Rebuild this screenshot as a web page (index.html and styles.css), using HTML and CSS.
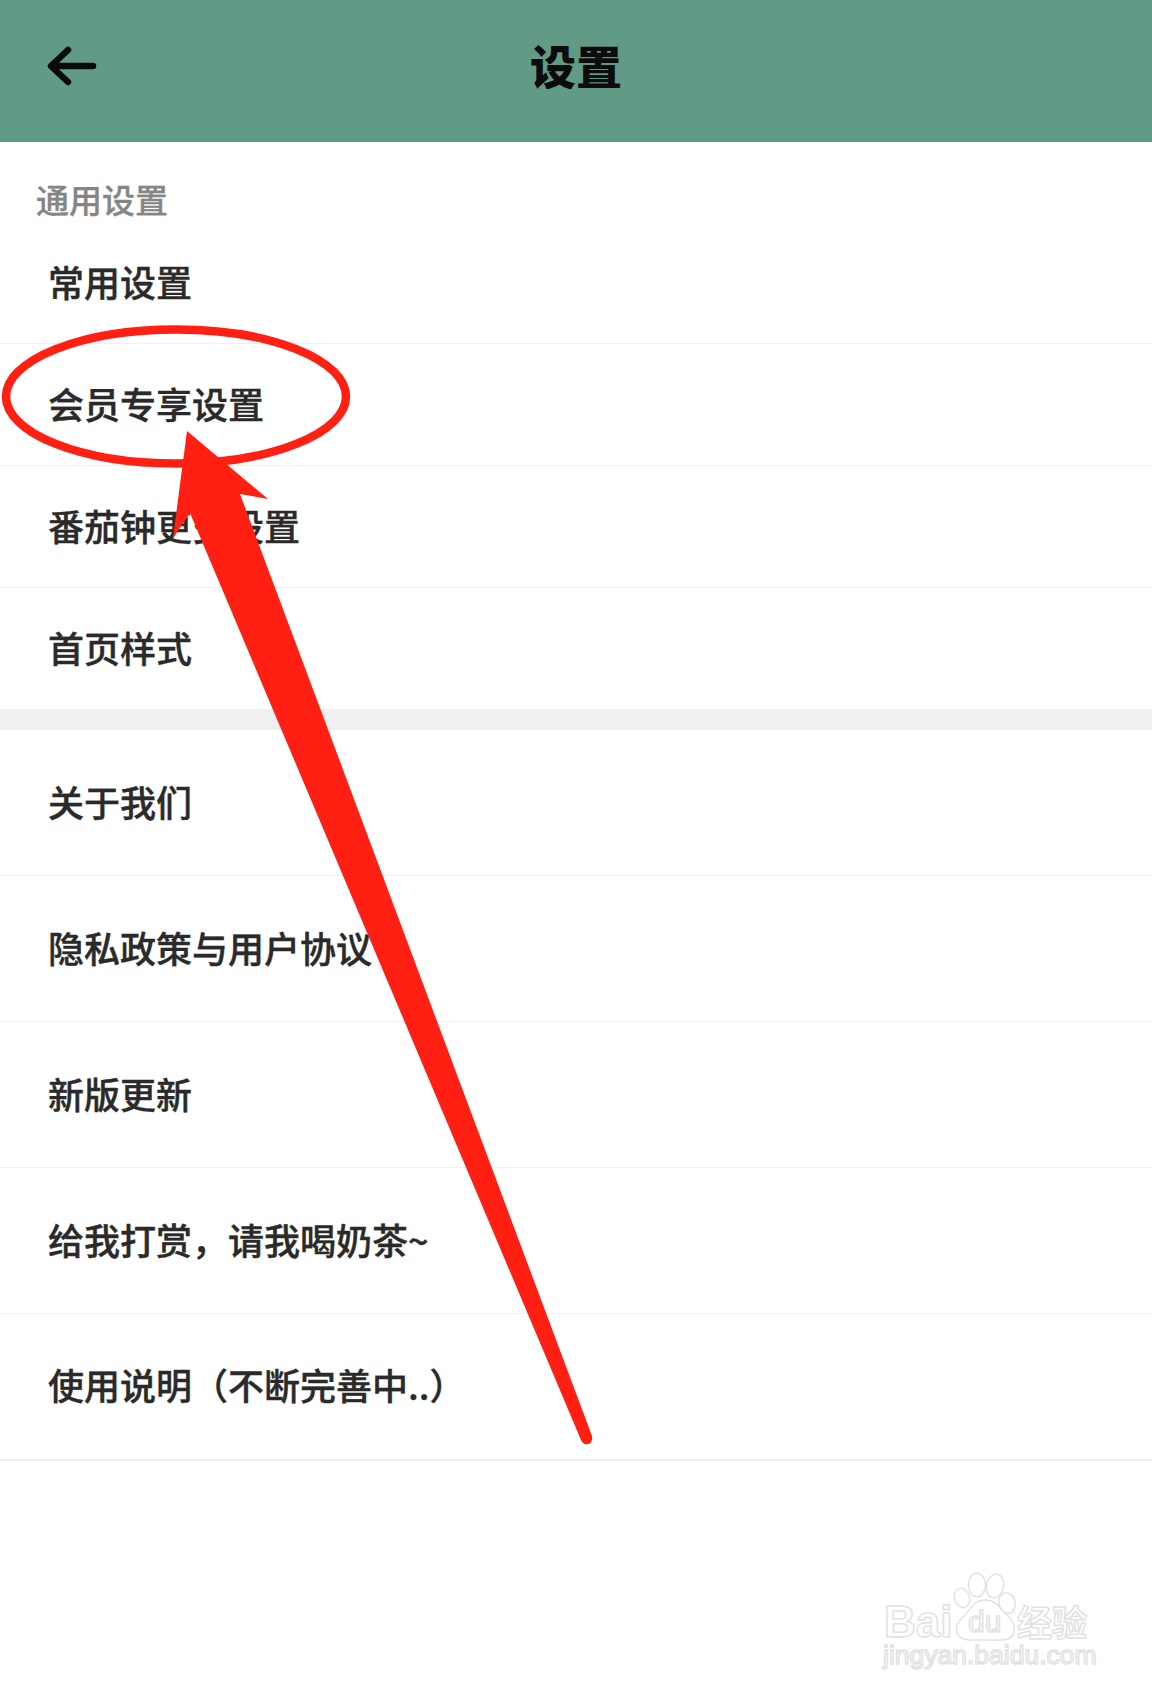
FILE: index.html
```html
<!DOCTYPE html>
<html lang="zh-CN">
<head>
	<title>设置</title>
	<meta charset="utf-8" />
	<link rel="stylesheet" href="styles.css">
</head>
<body>
	<div id="wrap">
		<header class="topbar">
			<a class="back">
				<svg width="52" height="40" viewBox="0 0 52 40"><path d="M47 20H6M22 4L5 20l17 16" fill="none" stroke="#0a0a0a" stroke-width="6.5" stroke-linecap="round" stroke-linejoin="round"/></svg>
			</a>
			<h1 class="title">设置</h1>
		</header>

		<section class="group">
			<h2 class="group-label">通用设置</h2>
			<div class="row">常用设置</div>
			<div class="row">会员专享设置</div>
			<div class="row">番茄钟更多设置</div>
			<div class="row row-last">首页样式</div>
		</section>

		<section class="group group-links">
			<div class="row">关于我们</div>
			<div class="row">隐私政策与用户协议</div>
			<div class="row">新版更新</div>
			<div class="row">给我打赏，请我喝奶茶~</div>
			<div class="row">使用说明（不断完善中..）</div>
		</section>
	</div>

	<!-- red markup drawn over the screenshot -->
	<svg class="markup" width="1152" height="1696" viewBox="0 0 1152 1696">
		<ellipse cx="176" cy="396.5" rx="170" ry="67" fill="none" stroke="#ff2013" stroke-width="8.5"/>
		<path d="M187 431L268 499L240 494L592 1436Q593 1443 588 1444Q583 1445 581 1440L190 513L173 538Z" fill="#ff2013"/>
	</svg>

	<svg class="watermark" width="240" height="120" viewBox="870 1570 240 120">
		<g fill="#fff" stroke="#e2e2e2" stroke-width="1.5">
			<text class="wm-bai" x="884" y="1637">Bai</text>
			<ellipse cx="962" cy="1598" rx="7.5" ry="10" transform="rotate(-20 962 1598)"/>
			<ellipse cx="977" cy="1585" rx="8.5" ry="12"/>
			<ellipse cx="995" cy="1586" rx="8.5" ry="12" transform="rotate(12 995 1586)"/>
			<ellipse cx="1007" cy="1603" rx="8" ry="10.5" transform="rotate(-15 1007 1603)"/>
			<path d="M985 1600C972 1600 970 1612 962 1618C952 1628 956 1640 970 1640C978 1640 992 1640 1002 1640C1016 1640 1018 1626 1008 1616C1000 1610 998 1600 985 1600Z"/>
			<text class="wm-du" x="968" y="1632">du</text>
			<text class="wm-cn" x="1017" y="1636">经验</text>
			<text class="wm-url" x="883" y="1664">jingyan.baidu.com</text>
		</g>
	</svg>
</body>
</html>
```

FILE: styles.css
```css
html, body {
	margin: 0;
	height: 100%;
	background: #fff;
}
body {
	position: relative;
	font-family: "Noto Sans CJK SC", "Liberation Sans", sans-serif;
	color: #2a2a2a;
	overflow: hidden;
}
.topbar {
	display: flex;
	align-items: center;
	justify-content: center;
	position: relative;
	height: 142px;
	padding-bottom: 12px;
	box-sizing: border-box;
	background: #629b85;
}
.back {
	position: absolute;
	left: 46px;
	top: 46px;
	line-height: 0;
}
.title {
	margin: 0;
	font-size: 46px;
	font-weight: 900;
	line-height: 1.2;
	color: #0c0c0c;
}
.group-label {
	margin: 0;
	height: 80px;
	padding: 36px 0 0 36px;
	box-sizing: border-box;
	font-size: 33px;
	font-weight: 500;
	line-height: 42px;
	color: #858585;
	-webkit-text-stroke: .3px #858585;
}
.row {
	display: flex;
	align-items: center;
	height: 122px;
	padding: 0 0 4px 48px;
	box-sizing: border-box;
	border-bottom: 1px solid #f0f0f0;
	font-size: 36px;
	font-weight: 500;
	-webkit-text-stroke: .4px #2a2a2a;
}
.group > .row-last {
	height: 121px;
	border-bottom: none;
}
.group-links {
	border-top: 21px solid #f0f0f0;
}
.group-links .row {
	height: 146px;
}
.group-links .row:last-child {
	height: 147px;
	padding-bottom: 5px;
	border-bottom: 2px solid #eee;
}
.markup {
	position: absolute;
	left: 0;
	top: 0;
}
.watermark {
	position: absolute;
	left: 870px;
	top: 1570px;
}
.wm-bai {
	font-family: "Liberation Sans", sans-serif;
	font-size: 44px;
	font-weight: bold;
}
.wm-du {
	font-family: "Liberation Sans", sans-serif;
	font-size: 30px;
}
.wm-cn {
	font-size: 35px;
	font-weight: bold;
}
.wm-url {
	font-family: "Liberation Sans", sans-serif;
	font-size: 26.5px;
}
```
